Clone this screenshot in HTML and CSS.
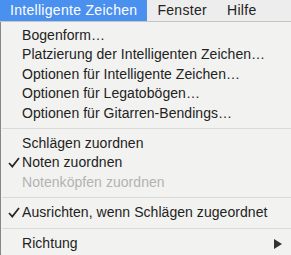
FILE: index.html
```html
<!DOCTYPE html>
<html lang="de">

<head>
  <meta charset="UTF-8">
  <title>Intelligente Zeichen</title>
  <link rel="stylesheet" href="styles.css">
</head>

<body>

  <div class="menubar">
    <span class="menubar__title menubar__title--active">Intelligente Zeichen</span>
    <span class="menubar__title">Fenster</span>
    <span class="menubar__title">Hilfe</span>
  </div>

  <div class="menu">
    <div class="menu__item">Bogenform…</div>
    <div class="menu__item">Platzierung der Intelligenten Zeichen…</div>
    <div class="menu__item">Optionen für Intelligente Zeichen…</div>
    <div class="menu__item">Optionen für Legatobögen…</div>
    <div class="menu__item">Optionen für Gitarren-Bendings…</div>

    <div class="menu__sep"></div>

    <div class="menu__item">Schlägen zuordnen</div>
    <div class="menu__item">
      <svg class="check" width="12" height="11" viewBox="0 0 12 11">
        <path d="M1 6 L4.3 9.6 L11 1" fill="none" stroke="#262626" stroke-width="1.7" />
      </svg>
      Noten zuordnen
    </div>
    <div class="menu__item menu__item--disabled">Notenköpfen zuordnen</div>

    <div class="menu__sep"></div>

    <div class="menu__item">
      <svg class="check" width="12" height="11" viewBox="0 0 12 11">
        <path d="M1 6 L4.3 9.6 L11 1" fill="none" stroke="#262626" stroke-width="1.7" />
      </svg>
      Ausrichten, wenn Schlägen zugeordnet
    </div>

    <div class="menu__sep"></div>

    <div class="menu__item">
      Richtung
      <span class="arrow"></span>
    </div>
  </div>

</body>

</html>
```

FILE: styles.css
```css
body {
  margin: 0;
  background-color: #8a8684;
  font-family: "Liberation Sans", Arial, sans-serif;
  font-size: 14px;
  color: #222;
}

.menubar {
  display: flex;
  height: 21px;
  background-color: #ededed;
  border-bottom: 1px solid #c6c6c6;
}

.menubar__title {
  padding: 0 10px;
  line-height: 21px;
  letter-spacing: 0.3px;
  color: #222;
}

.menubar__title--active {
  background-color: #4a90ef;
  color: #fff;
}

.menu {
  margin-left: 1px;
  padding: 4px 0 5px;
  background-color: #f2f2f0;
  border-bottom-left-radius: 5px;
  border-bottom: 1px solid #bdbdbd;
}

.menu__item {
  position: relative;
  height: 19.4px;
  line-height: 19.4px;
  padding-left: 21px;
  letter-spacing: 0.05px;
  white-space: nowrap;
}

.menu__item--disabled {
  color: #b3b3b3;
}

.menu__sep {
  height: 1px;
  margin: 5px 0 5px 1px;
  background-color: #dadada;
}

.check {
  position: absolute;
  left: 7px;
  top: 4px;
}

.arrow {
  position: absolute;
  right: 9px;
  top: 5px;
  width: 0;
  height: 0;
  border-top: 5px solid transparent;
  border-bottom: 5px solid transparent;
  border-left: 8px solid #333;
}
```
